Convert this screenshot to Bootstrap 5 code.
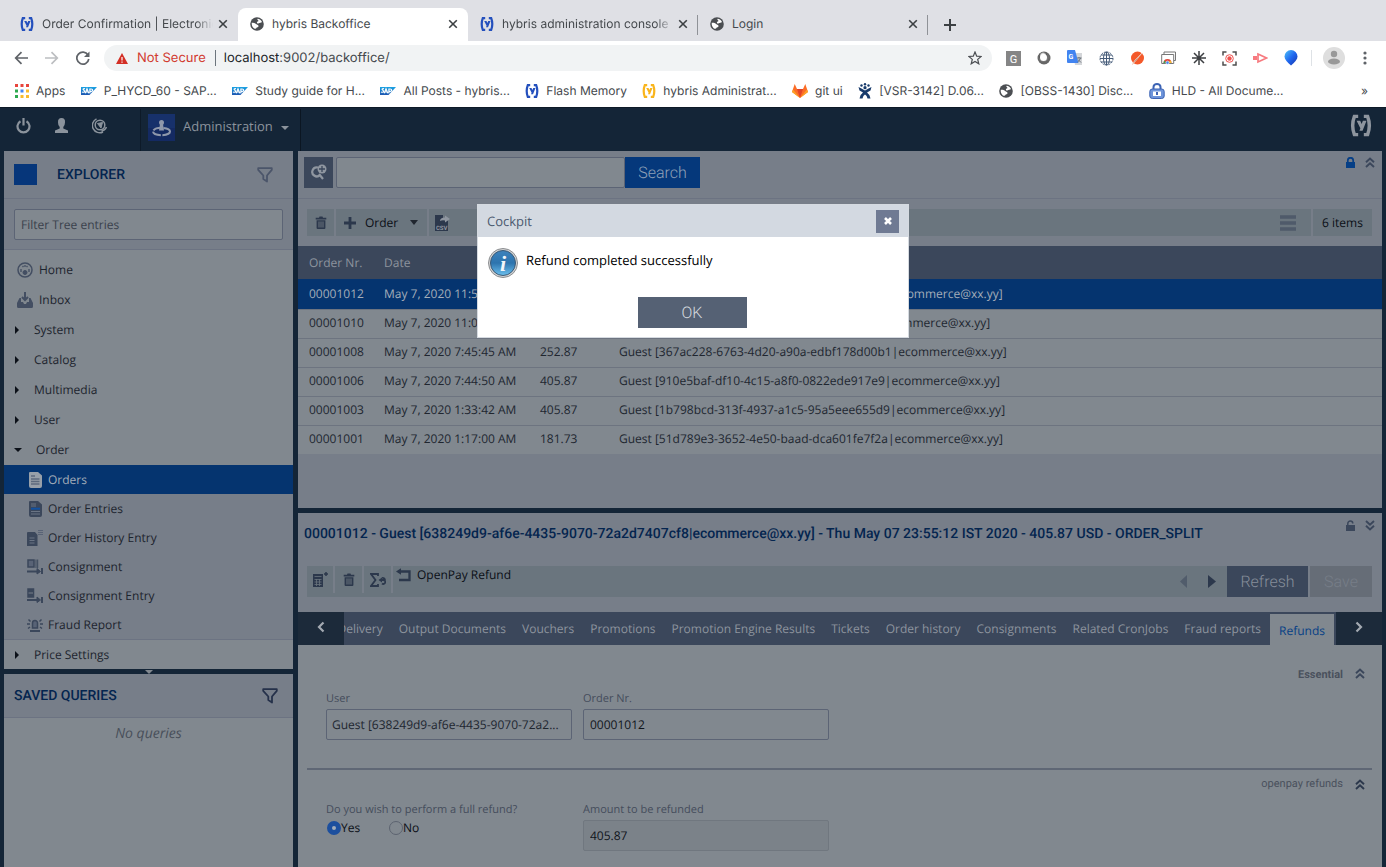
<!DOCTYPE html>
<html lang="en">
<head>
<meta charset="utf-8">
<meta name="viewport" content="width=device-width, initial-scale=1">
<title>hybris Backoffice</title>
<link href="https://cdn.jsdelivr.net/npm/bootstrap@5.3.0/dist/css/bootstrap.min.css" rel="stylesheet">
<style>
:root{--navy:#142537;--panel:#81888f;--bar:#777e89;--tool:#6a757e;--slate:#3b475b;--pick:#05346f;--edge:#6c7382;--ink:#20262f;--deep:#04254f}
body{font-family:"Open Sans",sans-serif;font-size:12px;line-height:16px;color:var(--ink);background:var(--navy);min-height:100vh;text-rendering:geometricPrecision}
input,button{text-rendering:inherit}
svg{display:block;flex:none}
a{color:inherit;text-decoration:none}
button{border:0;background:none;padding:0;color:inherit}
/* browser frame */
.chrome{font-family:Inter,sans-serif;background:#fff;color:#45494d}
.strip{background:#dfe0e5;height:41px;padding:8px 0 0 8px;font-size:12px}
.tabx{width:230px;height:33px;padding:0 10px 2px 12px;gap:8px}
.tabx.active{background:#fff;border-radius:8px 8px 0 0}
.sepline{border-right:1px solid #8f9297;height:20px;margin-left:-1px}
.fade-end{margin-right:-3px;-webkit-mask-image:linear-gradient(90deg,#000 90%,transparent);mask-image:linear-gradient(90deg,#000 90%,transparent)}
.addr{height:36px;padding:0 15px 2px 14px}
.omni{background:#f1f3f4;border-radius:13px;height:26px;font-size:13px;padding:0 10px 0 12px}
.marks{height:30px;padding:0 18px 3px 15px;font-size:12px}
.bm{gap:7px}
/* application */
.apphead{height:44px;color:#8b939c;border-top:1px solid #0e1a27}
.persp{border-left:1px solid #0d1a28;border-right:1px solid #0b1622;font-size:13px;height:42px;padding:0 11px 4px 7px}
.work{padding:0 4px;gap:5px}
.side{width:289px;background:var(--panel)}
.h-cap{font-family:Roboto,sans-serif;font-weight:500;font-size:14px;color:var(--deep);margin:0;line-height:20px}
.sidehead{background:var(--bar);height:48px;border-bottom:1px solid var(--edge);padding:0 20px 0 10px}
.filterbox{background:var(--bar);padding:10px 10px 9px;border-bottom:1px solid var(--edge)}
.fld{width:100%;height:31px;border:1px solid #5c6475;border-radius:2px;background:var(--panel);color:#10141b;padding:0 6px;font-size:12px;display:block}
.fld::placeholder{color:#3a414c;opacity:1}
.tree{padding-top:5px}
.node{height:30px;padding-left:10px;display:flex;align-items:center}
.leaf{height:29px;padding-left:23px;gap:5px;display:flex;align-items:center;background:var(--bar)}
.leaf.active{background:var(--pick);color:#a3adb9}
.arr{border:4px solid transparent;border-left-color:#0c1119;border-right:0;margin:0 15px 0 1px}
.arr.down{border:4px solid transparent;border-top-color:#0c1119;border-bottom:0;margin:0 14px 0 0}
.splitbar{height:5px;background:var(--navy)}
.savedhead{background:var(--bar);height:44px;border-bottom:1px solid var(--edge);padding:0 15px 0 10px}
.mainbar{background:var(--bar)}
.tgl{width:29px;height:31px;background:var(--slate)}
.bigbtn{font-family:Roboto,sans-serif;font-weight:300;font-size:16px;height:31px;border-radius:0;line-height:32px}
.searchrow{height:48px;padding:6px 7px 6px 6px;border-bottom:1px solid var(--edge)}
.toolrow{padding:10px 10px 10px 9px;gap:2px}
.seg{background:var(--tool);height:27px;color:#0b0f16}
.grid-t{table-layout:fixed;width:100%;margin:0;color:var(--ink)}
.grid-t th{background:var(--slate);color:#8d949e;font-weight:400;height:33px;padding:1px 11px 0;white-space:nowrap}
.grid-t td{height:29px;padding:0 11px 2px;border-top:1px solid #6d7480;background:var(--panel);white-space:nowrap}
.grid-t tr.sel td{background:var(--pick);color:#a3adb9;height:30px;padding-bottom:0;border-color:var(--pick)}
.c1{width:75px}.c2{width:156px}.c3{width:79px}
.rest{height:54px}
.detailhead{padding:11px 7px 0 6px;height:53px}
.detailtools{padding:0 10px 0 9px}
.tabsrow{background:var(--slate);height:33px;margin-top:15px}
.tabsrow .edgebtn{width:46px;background:#1c2a3a;color:#a3a9b1}
.tb{padding:0 8px;line-height:33px;color:#8d949e;white-space:nowrap}
.tb.active{background:var(--panel);color:#063f86;margin-top:2px;padding:0 9px;margin-left:1px}
.fieldgrid{padding:0 19px}
.fcol{width:246px}
.lbl{font-size:11px;color:#454d5c;line-height:16px;display:block}
.fcol label.lbl{margin-bottom:2px}
.secline{border-top:2px solid #5f6775}
.sect{font-family:Roboto,sans-serif;font-size:11px;color:#4a515d}
.rad{appearance:none;width:14px;height:14px;border:1px solid #5c6370;border-radius:50%;margin:0;flex:none}
.rad:checked{border:5px solid #1c4f9e;background:#a3adb9}
/* message box */
.modal-dialog.box{width:432px;max-width:432px;margin:204px auto 0}
.box .modal-content{border-radius:0;border:1px solid #d5dae0;color:#000}
.box .modal-header{height:32px;background:#d3d9e1;border:0;border-radius:0;padding:0 9px;color:#4c5a70}
.box .modal-title{font-size:13px;line-height:20px}
.box .modal-body{padding:11px 10px 0;font-size:13px}
.closebtn{width:23px;height:23px;background:#6f7a93;color:#fff}
.okbtn{width:109px;background:#556174;color:#d5d9df;border-radius:0}
</style>
</head>
<body class="d-flex flex-column">
<svg width="0" height="0" class="position-absolute" aria-hidden="true">
<defs>
<linearGradient id="sapg" x1="0" y1="0" x2="0" y2="1"><stop offset="0" stop-color="#1ba4e4"/><stop offset="1" stop-color="#1f56b0"/></linearGradient>
<radialGradient id="ball" cx=".45" cy=".35"><stop offset="0" stop-color="#fff"/><stop offset=".4" stop-color="#ddd"/><stop offset=".75" stop-color="#555"/><stop offset="1" stop-color="#777"/></radialGradient>
<linearGradient id="infog" x1="0" y1="0" x2="0" y2="1"><stop offset="0" stop-color="#3d83bd"/><stop offset=".5" stop-color="#2d74ae"/><stop offset="1" stop-color="#6cc0ee"/></linearGradient>
<linearGradient id="pin" x1="0" y1="0" x2="1" y2="1"><stop offset="0" stop-color="#4fc3f7"/><stop offset=".5" stop-color="#2068f0"/><stop offset="1" stop-color="#1531a8"/></linearGradient>
</defs>
<symbol id="hy" viewBox="0 0 14 14"><path d="M5.200 1.200H2.800Q.6 7 2.800 12.800H5.200M8.800 1.200h2.400Q13.400 7 11.200 12.800H8.800" fill="none" stroke="currentColor" stroke-width="2.200"/><path d="M4.200 4h2.300l.9 2L8.200 4h2.300L8 10.300H6l.6-1.600z" fill="currentColor"/></symbol>
<symbol id="globe" viewBox="0 0 14 14"><circle cx="7" cy="7" r="6.800" fill="#4b4e52"/><path d="M1.800 5.800c1.500-.2 3.200.2 4.700 1.400 1 .8 2.200.7 2 2-.2 1.200-1.800.8-2 1.600-.2.800-.8 1.200-1.800 1C3 11.200 1.300 8.600 1.800 5.800zM7.500 1.700c2 .2 3.800 1.500 4.500 3.300-.8 1.200-2.600.6-3.200 1.200-.9.800-2 .200-1.900-1 .1-.9 1.800-.5 1.500-1.400-.300-.8-1.400-.8-.9-2.100z" fill="#fff"/></symbol>
<symbol id="xx" viewBox="0 0 10 10"><path d="M1.200 1.200l7.600 7.600M8.800 1.200L1.200 8.800" stroke="#3c4043" stroke-width="1.600"/></symbol>
<symbol id="sap" viewBox="0 0 16 8"><path d="M0 0h16L8.500 8H0z" fill="url(#sapg)"/><path d="M4 1.800c-1.600-.6-2.600.4-1.300 1.300s1.300 2.700-1.800 1.900M4.200 6.300L6 1.800l1.800 4.500M5 5h2M8.900 6.300V2h1.300c2 0 2 2.300 0 2.300h-1" fill="none" stroke="#fff" stroke-width="1.200"/></symbol>
<symbol id="funnel" viewBox="0 0 16 16"><path d="M1.200 1.200h13.600v1.600L10 8.500v6L6.300 12V8.500L1.200 2.800z" fill="none" stroke="currentColor" stroke-width="1.800" stroke-linejoin="round"/></symbol>
<symbol id="trash" viewBox="0 0 12 13"><path d="M.7 1.700h3.300L4.500.5h3l.5 1.200h3.300v1.800H.7zM1.600 4.300h8.800V12q0 1-1 1H2.600q-1 0-1-1z" fill="currentColor"/><path d="M4 5.500v6M6 5.500v6M8 5.500v6" stroke="#6a757e"/></symbol>
<symbol id="chup" viewBox="0 0 10 11"><path d="M1 5.300l4-3.800 4 3.800M1 10l4-3.800L9 10" fill="none" stroke="currentColor" stroke-width="1.900"/></symbol>
<symbol id="ang" viewBox="0 0 8 12"><path d="M6.500 1.500L2 6l4.500 4.500" fill="none" stroke="currentColor" stroke-width="2.200"/></symbol>
</svg>

<header class="chrome">
 <div class="strip d-flex align-items-center">
  <div class="tabx d-flex align-items-center"><svg width="14" height="14" color="#2450bd"><use href="#hy"/></svg><a href="#" class="flex-grow-1 overflow-hidden text-nowrap fade-end">Order Confirmation | Electronics</a><button aria-label="Close tab"><svg width="10" height="10"><use href="#xx"/></svg></button></div>
  <div class="tabx active d-flex align-items-center"><svg width="14" height="14"><use href="#globe"/></svg><a href="#" class="flex-grow-1 text-truncate">hybris Backoffice</a><button aria-label="Close tab"><svg width="10" height="10"><use href="#xx"/></svg></button></div>
  <div class="tabx d-flex align-items-center"><svg width="14" height="14" color="#2450bd"><use href="#hy"/></svg><a href="#" class="flex-grow-1 overflow-hidden text-nowrap fade-end">hybris administration console | H</a><button aria-label="Close tab"><svg width="10" height="10"><use href="#xx"/></svg></button></div>
  <span class="sepline"></span>
  <div class="tabx d-flex align-items-center"><svg width="14" height="14"><use href="#globe"/></svg><a href="#" class="flex-grow-1 text-truncate">Login</a><button aria-label="Close tab"><svg width="10" height="10"><use href="#xx"/></svg></button></div>
  <span class="sepline me-3"></span>
  <button aria-label="New tab"><svg width="12" height="12"><path d="M6 0v12M0 6h12" stroke="#3c4043" stroke-width="2"/></svg></button>
 </div>
 <div class="addr d-flex align-items-center">
  <button aria-label="Back"><svg width="14" height="14"><path d="M14 7H2M7.500 1.200L1.700 7l5.800 5.800" fill="none" stroke="#5f6368" stroke-width="1.700"/></svg></button>
  <button aria-label="Forward" style="margin-left:17px"><svg width="14" height="14"><path d="M0 7h12M6.500 1.200L12.300 7l-5.800 5.800" fill="none" stroke="#bcbec1" stroke-width="1.700"/></svg></button>
  <button aria-label="Reload" style="margin:0 14px 0 17px"><svg width="14" height="14"><path d="M12 4A6 6 0 1 0 12.800 8" fill="none" stroke="#5f6368" stroke-width="1.700"/><path d="M13.500.5V6H8z" fill="#5f6368"/></svg></button>
  <div class="omni flex-grow-1 d-flex align-items-center">
   <svg width="12" height="11" style="margin-right:9px"><path d="M6 0l6 11H0z" fill="#d32f25"/><path d="M6 4v3.500M6 8.500v1.200" stroke="#fff" stroke-width="1.200"/></svg>
   <span style="color:#d23b30">Not Secure</span><span class="border-start border-secondary" style="height:16px;margin:0 8px 0 9px"></span>
   <span class="flex-grow-1"><span class="text-dark">localhost</span>:9002/backoffice/</span>
   <svg width="14" height="14" viewBox="0 0 14 14"><path d="M7 1l1.700 4.200 4.500.3-3.500 2.900 1.100 4.400L7 10.400l-3.800 2.400 1.100-4.400L.8 5.500l4.500-.3z" fill="none" stroke="#4b4e52" stroke-width="1.200"/></svg>
  </div>
  <div class="d-flex align-items-center" style="gap:16px;margin-left:14px">
   <svg width="15" height="15"><path d="M0 0h15v15H0z" fill="#858585"/><text x="7.500" y="11.500" text-anchor="middle" font-family="Roboto" font-size="11" fill="#fff">G</text></svg>
   <svg width="14" height="14"><circle cx="7" cy="7" r="6.500" fill="#666"/><circle cx="6.500" cy="6" r="5" fill="url(#ball)"/><circle cx="6.500" cy="6.500" r="3.500" fill="#fff"/></svg>
   <svg width="16" height="16"><path d="M6 3h9v12H8z" fill="#d4d6d9"/><path d="M1 0h7l3.500 13H1q-1 0-1-1V1q0-1 1-1z" fill="#4284f0"/><text x="1.500" y="9" font-family="Roboto" font-size="7" font-weight="700" fill="#fff">G</text><path d="M10 8h4.500M12 7v1M13.500 8q-1 3-3 4M11 9.500l3 3" stroke="#687078" fill="none"/></svg>
   <svg width="15" height="15" fill="none" stroke="#445a78"><circle cx="7.500" cy="7.500" r="6.500" stroke-dasharray="2 1"/><ellipse cx="7.500" cy="7.500" rx="3" ry="6.500"/><path d="M1 7.500h13M2 4h11M2 11h11M7.500 1v13"/></svg>
   <svg width="15" height="15"><circle cx="7.500" cy="7" r="6.500" fill="#f4592a"/><path d="M12 2L6.500 9 2.500 13.500 5 9z" fill="#8c7b75" stroke="#f8c9b8" stroke-width=".8"/></svg>
   <svg width="15" height="14"><path d="M3 1h11.500v8.500H3z" fill="#fff" stroke="#777"/><path d="M.7 3.500h12v9H.7z" fill="#fff" stroke="#777"/><path d="M2.500 12a4 4 0 0 1 8 0z" fill="#df4a3d"/><path d="M6.500 12h4a4 4 0 0 0-1-2.500z" fill="#f5c22c"/><path d="M2.500 12a4 4 0 0 1 1-2.500L5 12z" fill="#36a852"/><circle cx="6.500" cy="11.700" r="1.600" fill="#4386f4" stroke="#fff" stroke-width=".6"/></svg>
   <svg width="14" height="14"><path d="M7 0v14M0 7h14M2 2l10 10M12 2L2 12" stroke="#3d3f42" stroke-width="1.500"/></svg>
   <svg width="15" height="15" fill="none"><path d="M1 4.500V1h3.500M10.500 1H14v3.500M14 10.500V14h-3.500M4.500 14H1v-3.500" stroke="#4d4d4d" stroke-width="1.500"/><circle cx="7.500" cy="7.500" r="3.800" stroke="#f0524f"/><circle cx="7.500" cy="7.500" r="2.200" fill="#f0524f"/></svg>
   <svg width="15" height="14"><path d="M0 5h4v4H0z" fill="#f77a7f"/><path d="M5 3l8.500 4L5 11z" fill="#fff" stroke="#f77a7f" stroke-width="1.700"/></svg>
   <svg width="14" height="16"><path d="M7 15.500Q.5 10 .5 6.500a6.500 6.500 0 0 1 13 0Q13.500 10 7 15.500z" fill="url(#pin)"/></svg>
  </div>
  <span class="border-start" style="height:16px;margin:0 11px 0 13px"></span>
  <svg width="22" height="22"><circle cx="11" cy="11" r="11" fill="#dedede"/><circle cx="11" cy="7" r="3.200" fill="#989898"/><ellipse cx="11" cy="14.500" rx="6" ry="3" fill="#989898"/></svg>
  <svg width="4" height="14" class="me-1" style="margin-left:18px" fill="#5f6368"><circle cx="2" cy="2" r="1.600"/><circle cx="2" cy="7" r="1.600"/><circle cx="2" cy="12" r="1.600"/></svg>
 </div>
 <nav class="marks d-flex align-items-center justify-content-between">
  <a href="#" class="bm d-flex align-items-center"><svg width="14" height="14"><path d="M0 0h3v3H0zM5.500 0h3v3h-3zM11 0h3v3h-3z" fill="#e8453c"/><path d="M0 5.500h3v3H0z" fill="#2da94f"/><path d="M5.500 5.500h3v3h-3z" fill="#4486f4"/><path d="M11 5.500h3v3h-3zM5.500 11h3v3h-3zM11 11h3v3h-3z" fill="#f9bb2d"/><path d="M0 11h3v3H0z" fill="#2da94f"/></svg>Apps</a>
  <a href="#" class="bm d-flex align-items-center"><svg width="16" height="8"><use href="#sap"/></svg>P_HYCD_60 - SAP...</a>
  <a href="#" class="bm d-flex align-items-center"><svg width="16" height="8"><use href="#sap"/></svg>Study guide for H...</a>
  <a href="#" class="bm d-flex align-items-center"><svg width="16" height="8"><use href="#sap"/></svg>All Posts - hybris...</a>
  <a href="#" class="bm d-flex align-items-center"><svg width="14" height="14" color="#2450bd"><use href="#hy"/></svg>Flash Memory</a>
  <a href="#" class="bm d-flex align-items-center"><svg width="14" height="14" color="#f9b51c"><use href="#hy"/></svg>hybris Administrat...</a>
  <a href="#" class="bm d-flex align-items-center"><svg width="16" height="14"><path d="M2.700 0L5 5h6l2.300-5L16 8l-8 6-8-6z" fill="#fc6d26"/><path d="M5 5h6l-3 9z" fill="#e24329"/><path d="M0 8l1-2.500L8 14zM16 8l-1-2.500L8 14z" fill="#fca326"/></svg>git ui</a>
  <a href="#" class="bm d-flex align-items-center"><svg width="14" height="16"><g fill="#173a6b"><circle cx="3.500" cy="2.500" r="1.200"/><circle cx="7" cy="1.200" r="1.200"/><circle cx="10.500" cy="2.500" r="1.200"/><circle cx="7" cy="4.700" r="1.600"/><path d="M.5 4l3 1.500L7 7.500l3.500-2 3-1.500-1 3.500L9 9.500q3 2 3.500 6H9.500q-.5-3-2.500-4-2 1-2.500 4h-3q.5-4 3.500-6L1.500 7.500z"/></g></svg>[VSR-3142] D.06...</a>
  <a href="#" class="bm d-flex align-items-center"><svg width="14" height="14"><use href="#globe"/></svg>[OBSS-1430] Disc...</a>
  <a href="#" class="bm d-flex align-items-center"><svg width="16" height="16"><path d="M4.500 7V4a3.500 3 0 0 1 7 0v3" fill="none" stroke="#3c63b4" stroke-width="2"/><rect x=".8" y="6" width="14.400" height="9.500" rx="2.500" fill="#6d94da" stroke="#3c63b4"/><path d="M4 8.500h8v4.500H4z" fill="#fff"/><path d="M8 9v3" stroke="#3c63b4" stroke-width="2"/></svg>HLD - All Docume...</a>
  <button aria-label="More bookmarks" style="margin-left:62px">»</button>
 </nav>
</header>

<div class="apphead d-flex align-items-center">
 <div class="d-flex align-items-center pb-2" style="gap:24px;padding-left:16px">
  <button aria-label="Log out"><svg width="15" height="16"><path d="M4.500 3.200a6 6 0 1 0 6 0M7.500 0v7.500" fill="none" stroke="currentColor" stroke-width="2.200"/></svg></button>
  <button aria-label="User"><svg width="13" height="15"><path d="M6.500 0Q10.500 0 10 4.500 9.800 8 8.300 9v1.500l4.700 2V15H0v-2.500l4.700-2V9Q3 8 3 4.500 2.700 0 6.500 0z" fill="currentColor"/></svg></button>
  <button aria-label="Language"><svg width="15" height="16" fill="none" stroke="currentColor"><circle cx="8" cy="7" r="4.800" stroke-width="1.500"/><path d="M5.500 5.500l5-1-1.500 5.500z" fill="currentColor"/><path d="M4.500.8A7 7 0 0 0 11 14M14.500 9Q13 12.500 9.500 13" stroke-width="1.500"/></svg></button>
 </div>
 <button class="persp d-flex align-items-center" style="margin-left:33px">
  <svg width="27" height="27"><rect width="27" height="27" fill="#17316b"/><path d="M0 14h27v13H0z" fill="#142a62"/><circle cx="13.500" cy="8.500" r="2.500" fill="#8f98ab"/><path d="M12 10h3l1 6.500h-5z" fill="#8f98ab"/><ellipse cx="13.500" cy="17.500" rx="8.500" ry="3.700" fill="none" stroke="#8f98ab" stroke-width="2" stroke-dasharray="9 1.500"/></svg>
  <span class="ms-2 pb-1">Administration</span><svg width="8" height="4" class="ms-2"><path d="M0 0h8L4 4z" fill="#8b939c" /></svg>
 </button>
 <svg width="22" height="23" class="ms-auto mb-2" color="#8e959e" style="margin-right:14px"><use href="#hy"/></svg>
</div>

<div class="work d-flex flex-grow-1">
 <aside class="side flex-shrink-0 d-flex flex-column">
  <div class="sidehead d-flex align-items-center">
   <svg width="23" height="21"><path d="M0 0h23v21H0z" fill="#06367a"/></svg>
   <h2 class="h-cap flex-grow-1" style="margin-left:20px">EXPLORER</h2>
   <button aria-label="Filter" style="color:#4b556a"><svg width="16" height="16"><use href="#funnel"/></svg></button>
  </div>
  <div class="filterbox"><input class="fld" type="text" placeholder="Filter Tree entries" aria-label="Filter Tree entries"></div>
  <nav class="tree" style="color:#1d242e">
   <a href="#" class="node"><svg width="16" height="16" style="margin-left:3px" fill="none" stroke="#434e62"><circle cx="8" cy="8" r="7" stroke-width="1.500"/><path d="M4 10V7M5.500 5l1-1M8 3v2M10.500 5l-1-1M12 10V7" stroke-width="1.300"/><circle cx="8" cy="10.500" r="2" fill="#434e62"/></svg><span style="margin-left:6px">Home</span></a>
   <a href="#" class="node"><svg width="16" height="16" style="margin-left:3px"><path d="M8 0v7M5 5l3 3 3-3" fill="none" stroke="#434e62" stroke-width="2"/><path d="M2.500 6H4v4h2l1 2h2l1-2h2V6h1.500L16 11v3.500q0 1.500-1.500 1.500h-13Q0 16 0 14.500V11z" fill="#434e62"/></svg><span style="margin-left:6px">Inbox</span></a>
   <a href="#" class="node"><i class="arr"></i>System</a>
   <a href="#" class="node"><i class="arr"></i>Catalog</a>
   <a href="#" class="node"><i class="arr"></i>Multimedia</a>
   <a href="#" class="node"><i class="arr"></i>User</a>
   <a href="#" class="node"><i class="arr down"></i>Order</a>
   <a href="#" class="leaf active"><svg width="16" height="16"><path d="M3 0h8l4 3.500V14q0 2-2 2H4q-2 0-2-2V1q0-1 1-1z" fill="#98a0a9"/><path d="M4 4h4M4 7h8.500M4 9.500h8.500M4 12h8.500" stroke="#5d6a7d" stroke-width="1.300"/></svg>Orders</a>
   <a href="#" class="leaf"><svg width="16" height="16"><path d="M3 0h8l4 3.500V14q0 2-2 2H4q-2 0-2-2V1q0-1 1-1z" fill="#3b475b"/><path d="M4 3h5M4 5h5M4 10.500h9M4 13h9" stroke="#6a7484"/><path d="M4 7.700h9" stroke="#1251a0" stroke-width="2"/></svg>Order Entries</a>
   <a href="#" class="leaf"><svg width="16" height="16"><path d="M1 2h7l2.500 3v11H0V3q0-1 1-1z" fill="#3b475b"/><path d="M2.500 8h5M2.500 10.500h5M2.500 13h5" stroke="#6a7484"/><path d="M11 .5h5M11 2.500h5M11 4.500h5" stroke="#596376"/></svg>Order History Entry</a>
   <a href="#" class="leaf"><svg width="16" height="16" fill="none" stroke="#3b475b"><path d="M1 1h6v7H1z" fill="#596376" stroke-width="1.500"/><path d="M9 .5V9M10.700.5V9" /><path d="M0 12.500h12M15 9v6" stroke-width="2"/><path d="M10 9.500l3.500 3-3.500 2.500z" fill="#3b475b"/></svg>Consignment</a>
   <a href="#" class="leaf"><svg width="16" height="16" fill="none" stroke="#3b475b"><path d="M1 1h5.500v8H1z" fill="#3b475b" stroke-width="1.500"/><path d="M1.500 5h4.500" stroke="#777e89"/><path d="M0 12h12M15 9v6" stroke-width="2"/><path d="M10 9l3.500 3-3.500 2.500z" fill="#3b475b"/></svg>Consignment Entry</a>
   <a href="#" class="leaf"><svg width="16" height="14" fill="none" stroke="#3b475b"><path d="M5.500 10V5a2.500 2.500 0 0 1 5 0v5z" fill="#596376" stroke-width="1.500"/><path d="M3 13h10" stroke-width="2"/><path d="M0 6h3M13 6h3M1.500 1.500l2 2M14.500 1.500l-2 2M1 10.500l2-1.500M15 10.500L13 9" stroke-width="1.500"/></svg>Fraud Report</a>
   <a href="#" class="node border-top" style="border-color:#6c7382!important"><i class="arr"></i>Price Settings</a>
  </nav>
  <div class="splitbar d-flex justify-content-center"><svg width="8" height="4" class="mt-auto"><path d="M0 0h8L4 4z" fill="#81888f"/></svg></div>
  <div class="savedhead d-flex align-items-center justify-content-between"><h2 class="h-cap">SAVED QUERIES</h2><button aria-label="Filter queries" style="color:#25314a"><svg width="16" height="16"><use href="#funnel"/></svg></button></div>
  <p class="text-center fst-italic m-0 pt-2" style="color:#484f5a;font-size:14px">No queries</p>
 </aside>

 <main class="flex-grow-1 d-flex flex-column" style="min-width:0">
  <section class="mainbar">
   <div class="searchrow d-flex">
    <button class="tgl d-flex align-items-center justify-content-center" aria-label="Advanced search"><svg width="16" height="17" fill="none" stroke="#8f96a0"><path d="M7 3.500A4.500 4.500 0 1 0 9 11M8 10l4 5" stroke-width="2.200"/><circle cx="11" cy="5" r="4.500" fill="#8f96a0" stroke="none"/><path d="M11 2v6M8 5h6" stroke="#3b475b" stroke-width="1.300"/></svg></button>
    <input class="fld" style="width:289px;margin-left:3px" type="text" aria-label="Search text">
    <button class="bigbtn" style="width:75px;background:#05387b;color:#8fa0b8">Search</button>
    <span class="ms-auto d-flex"><svg width="9" height="11"><path d="M1.800 5.500V3.500a2.700 2.700 0 0 1 5.400 0v2" fill="none" stroke="#063f86" stroke-width="1.700"/><path d="M0 5h9v6H0z" fill="#063f86"/></svg><button class="ms-2 align-self-start" aria-label="Collapse" style="color:#3b475b;padding-left:2px"><svg width="10" height="11"><use href="#chup"/></svg></button></span>
   </div>
   <div class="toolrow d-flex">
    <button class="seg d-flex align-items-center justify-content-center" style="width:27px;color:#2c384c" aria-label="Delete"><svg width="12" height="13"><use href="#trash"/></svg></button>
    <button class="seg d-flex align-items-center px-2" style="width:91px"><svg width="12" height="12"><path d="M6 0v12M0 6h12" stroke="#2c384c" stroke-width="2.800"/></svg><span style="margin:0 8px 0 9px">Order</span><svg width="8" height="5" class="ms-1"><path d="M0 0h8L4 5z" fill="#20262f"/></svg></button>
    <div class="seg flex-grow-1 d-flex align-items-center justify-content-between" style="padding:0 15px 0 6px">
     <button aria-label="Export CSV"><svg width="16" height="16"><path d="M0 0h8v3h5v13H0z" fill="#2c384c"/><path d="M5 6q0-3.500 5-3.500V.5l5 3.500-5 3.500v-2Q7 5 5 6z" fill="#8f96a0"/><text x="6.700" y="14.500" text-anchor="middle" font-family="Roboto" font-weight="700" font-size="6" fill="#8f96a0">CSV</text></svg></button>
     <button aria-label="List view"><svg width="16" height="16"><path d="M0 2h16M0 8h16M0 14h16" stroke="#4f5a6a" stroke-width="3.500"/></svg></button>
    </div>
    <div class="seg px-2 d-flex align-items-center justify-content-center" style="width:59px">6 items</div>
   </div>
   <table class="grid-t">
    <colgroup><col class="c1"><col class="c2"><col class="c3"><col></colgroup>
    <thead><tr><th scope="col">Order Nr.</th><th scope="col">Date</th><th scope="col">Price</th><th scope="col">User</th></tr></thead>
    <tbody>
     <tr class="sel"><td>00001012</td><td>May 7, 2020 11:55:12 PM</td><td>405.87</td><td>Guest [638249d9-af6e-4435-9070-72a2d7407cf8|ecommerce@xx.yy]</td></tr>
     <tr><td>00001010</td><td>May 7, 2020 11:09:31 PM</td><td>405.87</td><td>Guest [7c1f29d9-af6e-4435-9070-72a2d740f1f|ecommerce@xx.yy]</td></tr>
     <tr><td>00001008</td><td>May 7, 2020 7:45:45 AM</td><td>252.87</td><td>Guest [367ac228-6763-4d20-a90a-edbf178d00b1|ecommerce@xx.yy]</td></tr>
     <tr><td>00001006</td><td>May 7, 2020 7:44:50 AM</td><td>405.87</td><td>Guest [910e5baf-df10-4c15-a8f0-0822ede917e9|ecommerce@xx.yy]</td></tr>
     <tr><td>00001003</td><td>May 7, 2020 1:33:42 AM</td><td>405.87</td><td>Guest [1b798bcd-313f-4937-a1c5-95a5eee655d9|ecommerce@xx.yy]</td></tr>
     <tr><td>00001001</td><td>May 7, 2020 1:17:00 AM</td><td>181.73</td><td>Guest [51d789e3-3652-4e50-baad-dca601fe7f2a|ecommerce@xx.yy]</td></tr>
    </tbody>
   </table>
   <div class="rest"></div>
  </section>
  <div class="splitbar"></div>
  <section class="flex-grow-1" style="background:var(--panel)">
   <div class="mainbar">
    <div class="detailhead d-flex align-items-start justify-content-between">
     <h2 class="h-cap">00001012 - Guest [638249d9-af6e-4435-9070-72a2d7407cf8|ecommerce@xx.yy] - Thu May 07 23:55:12 IST 2020 - 405.87 USD - ORDER_SPLIT</h2>
     <span class="d-flex" style="margin-top:-4px;color:#3b475b"><svg width="9" height="11"><path d="M1.800 5.500V3.500a2.500 2.500 0 0 1 5 0" fill="none" stroke="currentColor" stroke-width="1.500"/><path d="M0 5h9v6H0z" fill="currentColor"/></svg><button class="ms-2" aria-label="Expand" style="padding-left:2px"><svg width="10" height="11" style="transform:rotate(180deg)"><use href="#chup"/></svg></button></span>
    </div>
    <div class="detailtools d-flex">
     <div class="seg flex-grow-1 d-flex" style="height:31px;color:#2c384c">
      <button style="width:28px;height:27px;border-right:2px solid #777e89" class="d-flex align-items-center justify-content-center" aria-label="Calculate"><svg width="15" height="15"><path d="M0 2h10v13H0z" fill="#2c384c"/><path d="M1.500 4.500h7M1.500 7.500h7M1.500 10h7M1.500 12.500h7M3.500 7v7M6.500 7v7" stroke="#6a757e" stroke-width=".8"/><path d="M13 0v4M11 2h4" stroke="#2c384c" stroke-width="1.500"/></svg></button>
      <button style="width:29px;height:27px;border-right:2px solid #777e89" class="d-flex align-items-center justify-content-center" aria-label="Delete order"><svg width="12" height="13"><use href="#trash"/></svg></button>
      <button style="width:29px;height:27px;border-right:2px solid #777e89" class="d-flex align-items-center justify-content-center" aria-label="Recalculate"><svg width="16" height="14" fill="none" stroke="#2c384c" stroke-width="1.800"><path d="M8 3V1H1l4.500 6L1 13h7v-2M10 7h3a2 2 0 1 1-1 3.500M15 7a2.300 2.300 0 0 0-3-2"/><path d="M8.500 7L12 4.500v5z" fill="#2c384c" stroke="none"/></svg></button>
      <a href="#" class="d-flex" style="padding:2px 3px"><svg width="15" height="15"><path d="M2 3.500h11.500V12H3" fill="none" stroke="#2c384c" stroke-width="2.300"/><path d="M0 3.500L5 .3v6.500z" fill="#2c384c"/></svg><span style="color:#0b0f16;line-height:14px;margin-left:6px">OpenPay Refund</span></a>
      <span class="ms-auto d-flex align-items-center" style="gap:21px;padding-right:11px"><button aria-label="Previous"><svg width="7" height="13"><path d="M7 0v13L0 6.500z" fill="#515c6b"/></svg></button><button aria-label="Next"><svg width="8" height="13"><path d="M0 0l8 6.500L0 13z" fill="#2c384c"/></svg></button></span>
     </div>
     <button class="bigbtn" style="width:81px;background:#3b475b;color:#868e9a">Refresh</button>
     <button class="bigbtn" style="width:62px;background:#666d77;color:#777e88;margin-left:2px">Save</button>
    </div>
    <div class="tabsrow d-flex">
     <button class="edgebtn d-flex align-items-center justify-content-center flex-shrink-0" aria-label="Scroll left"><svg width="8" height="12" class="mb-1"><use href="#ang"/></svg></button>
     <nav class="flex-grow-1 d-flex justify-content-end overflow-hidden" style="padding-right:2px;min-width:0">
      <a href="#" class="tb">Delivery</a><a href="#" class="tb">Output Documents</a><a href="#" class="tb">Vouchers</a><a href="#" class="tb">Promotions</a><a href="#" class="tb">Promotion Engine Results</a><a href="#" class="tb">Tickets</a><a href="#" class="tb">Order history</a><a href="#" class="tb">Consignments</a><a href="#" class="tb">Related CronJobs</a><a href="#" class="tb">Fraud reports</a><a href="#" class="tb active">Refunds</a>
     </nav>
     <button class="edgebtn d-flex align-items-center justify-content-center flex-shrink-0" aria-label="Scroll right"><svg width="8" height="12" class="mb-1" style="transform:rotate(180deg)"><use href="#ang"/></svg></button>
    </div>
   </div>
   <form class="pb-3" style="padding-left:9px;padding-right:10px">
    <div class="d-flex justify-content-end align-items-center sect fw-bold" style="height:46px;padding:14px 7px 0 0">Essential<button type="button" aria-label="Collapse Essential" style="color:#3b475b;margin-left:12px"><svg width="10" height="11" class="mb-1"><use href="#chup"/></svg></button></div>
    <div class="fieldgrid d-flex" style="gap:11px;height:77px">
     <div class="fcol"><label class="lbl" for="usr">User</label><input id="usr" class="fld" style="color:var(--ink);padding:0 5px" value="Guest [638249d9-af6e-4435-9070-72a2..." readonly></div>
     <div class="fcol"><label class="lbl" for="onr">Order Nr.</label><input id="onr" class="fld" value="00001012"></div>
    </div>
    <div class="secline"></div>
    <div class="d-flex justify-content-end align-items-center sect" style="height:28px;padding-right:7px;margin-bottom:4px">openpay refunds<button type="button" aria-label="Collapse refunds" style="color:#2c384c;margin-left:12px"><svg width="10" height="11"><use href="#chup"/></svg></button></div>
    <div class="fieldgrid d-flex" style="gap:11px">
     <div class="fcol"><span class="lbl">Do you wish to perform a full refund?</span>
      <div class="d-flex" style="color:#0b0f16;padding:2px 0 0 1px"><label class="d-flex align-items-center" style="width:62px"><input class="rad" type="radio" name="full" checked>Yes</label><label class="d-flex align-items-center"><input class="rad" type="radio" name="full">No</label></div></div>
     <div class="fcol"><label class="lbl" for="amt">Amount to be refunded</label><input id="amt" class="fld" style="background:#7b8289;border-color:#70777f" value="405.87" readonly></div>
    </div>
   </form>
  </section>
 </main>
</div>

<div class="modal d-block" tabindex="-1" role="dialog" aria-labelledby="boxtitle">
 <div class="modal-dialog box"><div class="modal-content">
  <div class="modal-header"><h1 class="modal-title" id="boxtitle">Cockpit</h1><button class="closebtn d-flex align-items-center justify-content-center" aria-label="Close"><svg width="8" height="8"><path d="M1 1l6 6M7 1L1 7" stroke="#fff" stroke-width="2.600"/></svg></button></div>
  <div class="modal-body d-flex">
   <svg width="30" height="30"><circle cx="15" cy="15" r="14.500" fill="#d4d4d4" stroke="#8a8d90"/><circle cx="15" cy="15" r="12.500" fill="url(#infog)" stroke="#3a5a77"/><text x="15" y="23" text-anchor="middle" font-family="Liberation Serif" font-style="italic" font-weight="700" font-size="22" fill="#f2f6fa">i</text></svg>
   <span style="margin:4px 0 0 8px">Refund completed successfully</span>
  </div>
  <div class="text-center" style="padding:19px 2px 9px 0"><button class="bigbtn okbtn">OK</button></div>
 </div></div>
</div>
<script src="https://cdn.jsdelivr.net/npm/bootstrap@5.3.0/dist/js/bootstrap.bundle.min.js"></script>
</body>
</html>
